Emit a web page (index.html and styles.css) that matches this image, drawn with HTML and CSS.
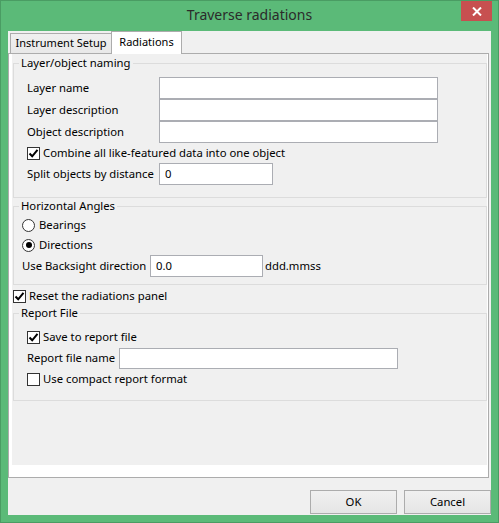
FILE: index.html
```
<!DOCTYPE html>
<html>
<head>
<meta charset="utf-8">
<title>Traverse radiations</title>
<link rel="stylesheet" href="styles.css">
</head>
<body>
<div class="window">
  <div class="titlebar">
    <div class="title">Traverse radiations</div>
    <div class="close">
      <svg width="10" height="9" viewBox="0 0 10 9"><path d="M1 0.5 L9 8.5 M9 0.5 L1 8.5" stroke="#fff" stroke-width="2" fill="none"/></svg>
    </div>
  </div>
  <div class="client">
    <div class="tabs">
      <div class="tab">Instrument Setup</div>
      <div class="tab active">Radiations</div>
    </div>
    <div class="pane">
      <div class="panel">
        <fieldset class="group g1">
          <legend>Layer/object naming</legend>
          <div class="body b1">
            <div class="row field"><span class="label l1">Layer name</span><input class="text wide" type="text"></div>
            <div class="row field"><span class="label l1">Layer description</span><input class="text wide" type="text"></div>
            <div class="row field"><span class="label l1">Object description</span><input class="text wide" type="text"></div>
            <div class="row check"><span class="box"><svg width="11" height="11" viewBox="0 0 11 11"><path d="M1.5 5.5 L4.2 8.3 L9.5 1.8" stroke="#000" stroke-width="2" fill="none"/></svg></span><span class="txt">Combine all like-featured data into one object</span></div>
            <div class="row field"><span class="label l1">Split objects by distance</span><input class="text short" type="text" value="0"></div>
          </div>
        </fieldset>
        <fieldset class="group g2">
          <legend>Horizontal Angles</legend>
          <div class="body b2">
            <div class="row check"><span class="radio"></span><span class="txt">Bearings</span></div>
            <div class="row check"><span class="radio on"><span class="dot"></span></span><span class="txt">Directions</span></div>
            <div class="row field"><span class="label l2">Use Backsight direction</span><input class="text mid" type="text" value="0.0"><span class="unit">ddd.mmss</span></div>
          </div>
        </fieldset>
        <div class="row check reset"><span class="box"><svg width="11" height="11" viewBox="0 0 11 11"><path d="M1.5 5.5 L4.2 8.3 L9.5 1.8" stroke="#000" stroke-width="2" fill="none"/></svg></span><span class="txt">Reset the radiations panel</span></div>
        <fieldset class="group g3">
          <legend>Report File</legend>
          <div class="body b3">
            <div class="row check"><span class="box"><svg width="11" height="11" viewBox="0 0 11 11"><path d="M1.5 5.5 L4.2 8.3 L9.5 1.8" stroke="#000" stroke-width="2" fill="none"/></svg></span><span class="txt">Save to report file</span></div>
            <div class="row field"><span class="label l3">Report file name</span><input class="text wide rep" type="text"></div>
            <div class="row check"><span class="box"></span><span class="txt">Use compact report format</span></div>
          </div>
        </fieldset>
      </div>
    </div>
    <div class="buttons">
      <button class="btn">OK</button>
      <button class="btn">Cancel</button>
    </div>
  </div>
</div>
</body>
</html>
```
FILE: styles.css
```
html, body {
  margin: 0;
  padding: 0;
  background: #5bba78;
}

.window {
  width: 499px;
  height: 523px;
  box-sizing: border-box;
  border: 1px solid #4a9c63;
  background: #5bba78;
  display: flex;
  flex-direction: column;
  font-family: "Noto Sans", "Open Sans", sans-serif;
  font-size: 11.3px;
  color: #000;
}

.titlebar {
  height: 30px;
  display: grid;
  grid-template-columns: 1fr auto 1fr;
  align-items: start;
}

.title {
  grid-column: 2;
  font-size: 14px;
  line-height: 28px;
  color: #2b2b2b;
}

.close {
  grid-column: 3;
  justify-self: end;
  margin-right: 6px;
  width: 31px;
  height: 20px;
  background: #c75050;
  display: flex;
  align-items: center;
  justify-content: center;
}

.close svg { display: block; }

.client {
  margin: 0 7px 7px;
  height: 484px;
  background: #f0f0f0;
  display: flex;
  flex-direction: column;
}

.tabs {
  height: 22px;
  display: flex;
  align-items: flex-end;
  padding-left: 2px;
  flex: none;
}

.tab {
  height: 20px;
  width: 101px;
  box-sizing: border-box;
  border: 1px solid #acacac;
  border-bottom: 0;
  border-right: 0;
  background: linear-gradient(#f0f0f0, #e8e8e8);
  text-align: center;
  font-size: 11px;
  line-height: 17px;
}

.tab.active {
  height: 23px;
  width: 71px;
  border-right: 1px solid #acacac;
  background: #fff;
  margin-bottom: -1px;
  position: relative;
  z-index: 1;
  line-height: 19px;
}

.pane {
  flex: none;
  width: 481px;
  height: 425px;
  box-sizing: border-box;
  border: 1px solid #acacac;
  background: #fff;
  padding: 0 1px 12px 3px;
}

.panel {
  height: 100%;
  box-sizing: border-box;
  background: #f0f0f0;
  padding-top: 2px;
}

.group {
  margin: 0 0 0 1px;
  padding: 0;
  border: 1px solid #dcdcdc;
  min-width: 0;
}

.group legend {
  margin-left: 5px;
  padding: 0 2px 1px;
  line-height: 14px;
}

.g2 { margin-top: 1px; }

.body { display: flex; flex-direction: column; }
.b1 { padding: 6px 0 12px 13px; }
.b2 { padding: 1px 0 7px 8px; }
.b3 { padding: 6px 0 11px 13px; }

.row {
  display: flex;
  align-items: center;
  white-space: nowrap;
}

.row.field { height: 22px; }
.row.check { height: 20px; }

.label, .txt, .unit {
  flex: none;
  padding-bottom: 2px;
}
.l1 { width: 132px; }
.l2 { width: 128px; }
.l3 { width: 92px; }

.text {
  -webkit-appearance: none;
  appearance: none;
  margin: 0;
  box-sizing: border-box;
  height: 22px;
  border: 1px solid #abadb3;
  background: #fff;
  padding: 0 5px 2px;
  font-family: inherit;
  font-size: 11.3px;
  color: #000;
  outline: none;
  border-radius: 0;
}

.text.wide { width: 279px; }
.text.short { width: 114px; }
.text.mid { width: 113px; }
.text.rep { height: 21px; }

.unit { margin-left: 2px; }

.box {
  flex: none;
  width: 13px;
  height: 13px;
  box-sizing: border-box;
  border: 1px solid #333;
  background: #fff;
  margin-right: 3px;
  display: flex;
  align-items: center;
  justify-content: center;
}

.box svg { display: block; }

.radio {
  flex: none;
  width: 13px;
  height: 13px;
  box-sizing: border-box;
  border: 1px solid #333;
  border-radius: 50%;
  background: #fff;
  margin-right: 4px;
  display: flex;
  align-items: center;
  justify-content: center;
}

.radio .dot {
  width: 6px;
  height: 6px;
  border-radius: 50%;
  background: #000;
}

.reset {
  margin: 1px 0 0 1px;
}

.buttons {
  display: flex;
  justify-content: flex-end;
  gap: 7px;
  margin-top: 12px;
  flex: none;
}

.btn {
  width: 87px;
  height: 24px;
  margin: 0;
  padding: 0 0 2px;
  box-sizing: border-box;
  border: 1px solid #acacac;
  background: linear-gradient(#f0f0f0, #e5e5e5);
  font-family: inherit;
  font-size: 11.3px;
  color: #000;
  border-radius: 0;
}
```
